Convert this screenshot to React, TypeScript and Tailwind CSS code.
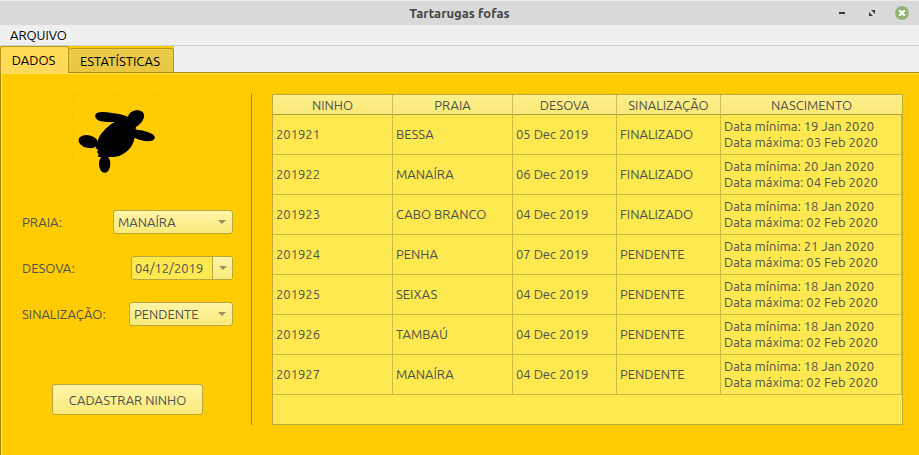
import React from "react";

type Nest = {
  id: string;
  beach: string;
  laid: string;
  status: string;
  min: string;
  max: string;
};

const nests: Nest[] = [
  { id: "201921", beach: "BESSA", laid: "05 Dec 2019", status: "FINALIZADO", min: "19 Jan 2020", max: "03 Feb 2020" },
  { id: "201922", beach: "MANAÍRA", laid: "06 Dec 2019", status: "FINALIZADO", min: "20 Jan 2020", max: "04 Feb 2020" },
  { id: "201923", beach: "CABO BRANCO", laid: "04 Dec 2019", status: "FINALIZADO", min: "18 Jan 2020", max: "02 Feb 2020" },
  { id: "201924", beach: "PENHA", laid: "07 Dec 2019", status: "PENDENTE", min: "21 Jan 2020", max: "05 Feb 2020" },
  { id: "201925", beach: "SEIXAS", laid: "04 Dec 2019", status: "PENDENTE", min: "18 Jan 2020", max: "02 Feb 2020" },
  { id: "201926", beach: "TAMBAÚ", laid: "04 Dec 2019", status: "PENDENTE", min: "18 Jan 2020", max: "02 Feb 2020" },
  { id: "201927", beach: "MANAÍRA", laid: "04 Dec 2019", status: "PENDENTE", min: "18 Jan 2020", max: "02 Feb 2020" },
];

function Caret() {
  return (
    <svg width="8" height="4" viewBox="0 0 8 4" aria-hidden="true">
      <path d="M0 0h8L4 4z" fill="#9c9060" />
    </svg>
  );
}

function Turtle() {
  return (
    <svg width="92" height="82" viewBox="0 0 276 246" role="img" aria-label="Tartaruga">
      <rect x="2" y="2" width="270" height="240" fill="none" stroke="#eac012" strokeWidth="2" strokeDasharray="7 8" />
      <g fill="#000">
        <path d="M70 63C72 53 95 53 116 56C138 58 154 62 168 68C171 56 182 49 197 49C211 50 218 58 216 70C213 82 204 92 192 99C190 103 191 106 194 107C211 108 232 114 244 122C252 130 249 138 236 141C220 143 202 138 188 131C184 150 176 164 162 174C148 186 130 190 117 189L77 189L80 182L75 174L78 167L71 163L80 132C88 116 106 96 128 84C107 85 86 83 77 78C71 73 68 68 70 63Z" />
        <ellipse cx="49" cy="143" rx="30" ry="19" transform="rotate(12 49 143)" />
        <ellipse cx="98" cy="210" rx="17" ry="26" />
      </g>
    </svg>
  );
}

function Choice({ id, label, options, width }: { id: string; label: string; options: string[]; width: string }) {
  return (
    <div className="flex items-center justify-between">
      <label htmlFor={id}>{label}</label>
      <div className={`relative ${width}`}>
        <select
          id={id}
          className="block h-6 w-full appearance-none rounded-[3px] border border-[#b9a63e] bg-linear-to-b from-[#fff4a8] to-[#faea78] pr-5 pl-1 leading-[22px] outline-none"
        >
          {options.map((option) => (
            <option key={option}>{option}</option>
          ))}
        </select>
        <span className="pointer-events-none absolute inset-y-0 right-[7px] flex items-center">
          <Caret />
        </span>
      </div>
    </div>
  );
}

const headCell = "h-5 border-r border-b border-[#cfbf52] border-b-[#b3a138] p-0 text-center font-normal last:border-r-0";
const bodyCell = "h-10 border-r border-b border-[#cdbc3e] px-[3px] pt-0 pb-[2px]";

export default function App() {
  return (
    <div className="flex min-h-screen flex-col bg-[#efefef] font-['Ubuntu','Noto_Sans',sans-serif] text-[13px] leading-4 text-[#525250]">
      <header className="grid h-[25px] grid-cols-[1fr_auto_1fr] items-center border-t border-[#ebebeb] bg-[#d9d9d9]">
        <span />
        <h1 className="text-[13px] font-semibold text-[#454545]">Tartarugas fofas</h1>
        <div className="flex items-center justify-end gap-4 pr-[10px]">
          <button type="button" aria-label="Minimizar" className="flex size-[14px] items-center justify-center">
            <span className="h-[2px] w-[6px] bg-[#3a3a3a]" />
          </button>
          <button type="button" aria-label="Maximizar" className="flex size-[14px] items-center justify-center">
            <svg width="6" height="6" viewBox="0 0 6 6" fill="#3a3a3a">
              <path d="M2 0h4v4zM0 2v4h4z" />
            </svg>
          </button>
          <button type="button" aria-label="Fechar" className="flex size-[14px] items-center justify-center rounded-full bg-[#92b574]">
            <svg width="6" height="6" viewBox="0 0 6 6" stroke="#fff" strokeWidth="2">
              <path d="M0 0l6 6M6 0L0 6" />
            </svg>
          </button>
        </div>
      </header>

      <nav className="flex h-[21px] items-center border-b border-[#d2d2d2] px-[10px] text-black">
        <button type="button">ARQUIVO</button>
      </nav>

      <div role="tablist" className="flex h-[26px] items-end text-black">
        <div className="flex h-[26px] items-end bg-[#ffcc00]">
          <button
            type="button"
            role="tab"
            aria-selected="true"
            className="z-10 -mb-px h-[27px] w-[69px] rounded-t-[3px] border border-b-0 border-[#b59a1c] bg-linear-to-b from-[#ffdc50] to-[#ffd95a] pr-[2px]"
          >
            DADOS
          </button>
          <button
            type="button"
            role="tab"
            aria-selected="false"
            className="h-6 w-[105px] rounded-t-[3px] border border-b-0 border-l-0 border-[#b59a1c] bg-linear-to-b from-[#eccd48] to-[#e8c840] pr-[2px]"
          >
            ESTATÍSTICAS
          </button>
        </div>
      </div>

      <main className="flex flex-1 items-start border-t border-l border-[#a88a00] bg-[#ffcc00] pt-[21px] pr-4 pb-[30px] pl-[21px] shadow-[inset_1px_1px_0_#ffe066]">
        <form className="flex w-[211px] shrink-0 flex-col" onSubmit={(e) => e.preventDefault()}>
          <div className="flex h-[116px] justify-center pr-5">
            <Turtle />
          </div>
          <div className="flex flex-col gap-[22px]">
            <Choice id="praia" label="PRAIA:" options={["MANAÍRA", "BESSA", "CABO BRANCO", "PENHA", "SEIXAS", "TAMBAÚ"]} width="w-[120px]" />
            <div className="flex items-center justify-between">
              <label htmlFor="desova">DESOVA:</label>
              <div className="flex h-6 w-[102px] overflow-hidden rounded-[3px] border border-[#b9a63e] bg-[#fce84f]">
                <input id="desova" type="text" defaultValue="04/12/2019" className="w-20 bg-transparent pl-[3px] outline-none" />
                <button
                  type="button"
                  aria-label="Abrir calendário"
                  className="flex flex-1 items-center justify-center border-l border-[#b9a63e] bg-linear-to-b from-[#fff4a8] to-[#faea78]"
                >
                  <Caret />
                </button>
              </div>
            </div>
            <Choice id="sinalizacao" label="SINALIZAÇÃO:" options={["PENDENTE", "FINALIZADO"]} width="w-[104px]" />
          </div>
          <button
            type="submit"
            className="mt-[58px] mr-[30px] ml-[30px] h-[31px] rounded-[3px] border border-[#b9a63e] bg-linear-to-b from-[#fff4a8] to-[#faea78]"
          >
            CADASTRAR NINHO
          </button>
        </form>

        <div className="mr-5 ml-[18px] w-px self-stretch bg-[#a88a00]" />

        <section className="min-w-0 flex-1 self-stretch border border-[#beac3f] bg-[#fce84f]">
          <table className="w-full table-fixed border-separate border-spacing-0">
            <colgroup>
              <col className="w-[120px]" />
              <col className="w-[120px]" />
              <col className="w-[104px]" />
              <col className="w-[104px]" />
              <col />
            </colgroup>
            <thead className="bg-linear-to-b from-[#fdf08c] to-[#fae876]">
              <tr>
                <th className={headCell}>NINHO</th>
                <th className={headCell}>PRAIA</th>
                <th className={headCell}>DESOVA</th>
                <th className={headCell}>SINALIZAÇÃO</th>
                <th className={headCell}>NASCIMENTO</th>
              </tr>
            </thead>
            <tbody>
              {nests.map((nest) => (
                <tr key={nest.id}>
                  <td className={bodyCell}>{nest.id}</td>
                  <td className={bodyCell}>{nest.beach}</td>
                  <td className={bodyCell}>{nest.laid}</td>
                  <td className={bodyCell}>{nest.status}</td>
                  <td className={bodyCell}>
                    Data mínima: {nest.min}
                    <br />
                    Data máxima: {nest.max}
                  </td>
                </tr>
              ))}
            </tbody>
          </table>
        </section>
      </main>
    </div>
  );
}
